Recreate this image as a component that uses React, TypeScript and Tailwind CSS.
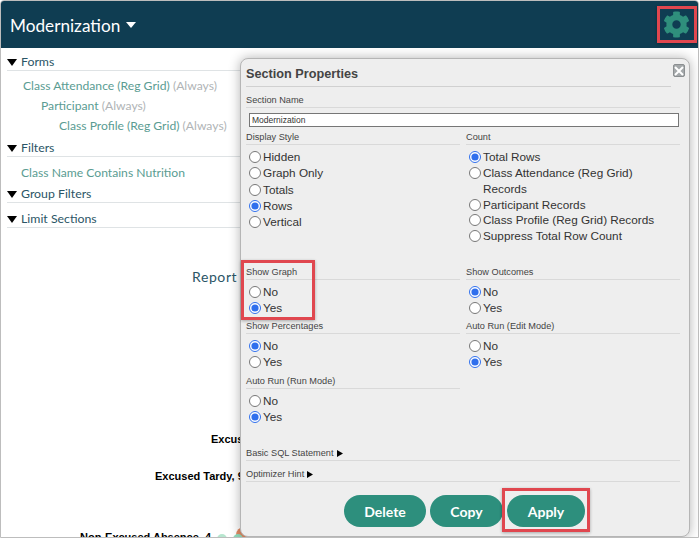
import React from 'react';
import { FaCog } from 'react-icons/fa';

const Caret = () => (
  <svg width="10" height="7" viewBox="0 0 10 7" className="shrink-0">
    <path d="M0 0h10L5 7z" fill="#000" />
  </svg>
);

const TreeHead = ({ label, className }: { label: string; className: string }) => (
  <div className={`flex items-center gap-[4px] border-b border-[#dfe3e5] h-[17px] text-[12.3px] text-[#2b5566] ${className}`}>
    <Caret />
    <span>{label}</span>
  </div>
);

const TreeLink = ({ name, note, className }: { name: string; note?: string; className: string }) => (
  <div className={`text-[12.15px] leading-[20px] whitespace-nowrap text-[#5a9c92] ${className}`}>
    {name} {note && <span className="text-[#b0b4b6]">{note}</span>}
  </div>
);

const Label = ({ text }: { text: string }) => (
  <div className="h-[14px] leading-[13px] text-[9.2px] text-[#444] border-b border-[#d9d9d9] whitespace-nowrap">{text}</div>
);

const Radio = ({ group, label, checked }: { group: string; label: string; checked?: boolean }) => (
  <label className="flex items-start ml-[3px] text-[11.75px] text-[#333]">
    <input type="radio" name={group} defaultChecked={checked} className="w-[12px] h-[12px] m-0 mt-[2px] mr-[2px] shrink-0 accent-[#2f6fed]" />
    <span>{label}</span>
  </label>
);

const Options = ({ group, items, selected, className }: { group: string; items: string[]; selected: string; className: string }) => (
  <div className={className}>
    {items.map((it) => (
      <Radio key={it} group={group} label={it} checked={it === selected} />
    ))}
  </div>
);

const PillButton = ({ text, className }: { text: string; className: string }) => (
  <button className={`h-[32px] rounded-full bg-[#2d8f7d] text-white text-[14px] font-bold ${className}`}>{text}</button>
);

export default function App() {
  return (
    <div className="relative w-[699px] h-[538px] overflow-hidden bg-white border border-[#bdbdbd] rounded-t-[4px] font-['Lato',sans-serif]">
      <div className="h-[47px] bg-[#0f3d52] flex items-center justify-between pl-[9px] pr-[8px]">
        <div className="flex items-center gap-[6px] pt-[2px] text-white text-[17.2px]">
          <span>Modernization</span>
          <svg width="10" height="6" viewBox="0 0 10 6"><path d="M0 0h10L5 6z" fill="#fff" /></svg>
        </div>
        <FaCog className="text-[#2f8f7c] w-[27px] h-[27px]" />
      </div>

      <div className="pl-[6px] w-[500px] pt-[6px]">
        <TreeHead label="Forms" className="" />
        <TreeLink name="Class Attendance (Reg Grid)" note="(Always)" className="ml-[16px] mt-[5px]" />
        <TreeLink name="Participant" note="(Always)" className="ml-[34px]" />
        <TreeLink name="Class Profile (Reg Grid)" note="(Always)" className="ml-[52px]" />
        <TreeHead label="Filters" className="mt-[4px]" />
        <TreeLink name="Class Name Contains Nutrition" className="ml-[14px] mt-[6px]" />
        <TreeHead label="Group Filters" className="mt-[3px]" />
        <TreeHead label="Limit Sections" className="mt-[8px]" />
      </div>

      {/* chart behind the dialog */}
      <div className="absolute left-[191px] top-[265px] text-[14px] tracking-[0.6px] text-[#2b5566]">Report</div>
      <div className="absolute left-[210px] top-[430px] text-[11px] font-bold text-black font-['Liberation_Sans',sans-serif]">Excused</div>
      <div className="absolute left-[154px] top-[467px] text-[11px] font-bold text-black whitespace-nowrap font-['Liberation_Sans',sans-serif]">Excused Tardy, 9</div>
      <div className="absolute left-[79px] top-[528px] text-[11px] font-bold text-black whitespace-nowrap font-['Liberation_Sans',sans-serif]">Non-Excused Absence, 4</div>
      <svg className="absolute left-[212px] top-[518px]" width="40" height="20" viewBox="0 0 40 20">
        <circle cx="31" cy="16" r="8" fill="#e08a63" />
        <circle cx="9" cy="20" r="5" fill="#b7e6cf" />
        <circle cx="25" cy="20" r="5" fill="#8fd8b8" />
      </svg>

      {/* section properties dialog */}
      <div className="absolute left-[239px] top-[57px] w-[450px] h-[479px] bg-[#eeeeee] border border-[#b5b5b5] rounded-[8px] shadow-[0_0_12px_rgba(0,0,0,0.3)] font-['Liberation_Sans',sans-serif] pl-[5px] pr-[9px]">
        <div className="h-[28px] mr-[9px] border-b border-[#d0d0d0] text-[12.7px] font-bold text-[#444] leading-[30px]">Section Properties</div>
        <button className="absolute right-[4px] top-[5px] w-[12px] h-[13px] rounded-[2px] bg-[#a4a8aa] flex items-center justify-center border border-[#8b8f91]">
          <svg width="10" height="10" viewBox="0 0 10 10"><path d="M1 1l8 8M9 1l-8 8" stroke="#fff" strokeWidth="2" /></svg>
        </button>

        <div className="mt-[7px]"><Label text="Section Name" /></div>
        <input
          readOnly
          value="Modernization"
          className="block w-[430px] h-[14px] mt-[5px] ml-[3px] px-[2px] bg-white border border-[#767676] text-[8.5px] text-[#333] outline-none"
        />

        <div className="grid grid-cols-[214px_214px] gap-x-[6px] mt-[4px]">
          <div className="h-[135px]">
            <Label text="Display Style" />
            <Options
              group="display"
              items={['Hidden', 'Graph Only', 'Totals', 'Rows', 'Vertical']}
              selected="Rows"
              className="mt-[4px] leading-[16.25px]"
            />
          </div>
          <div>
            <Label text="Count" />
            <Options
              group="count"
              items={['Total Rows', 'Class Attendance (Reg Grid) Records', 'Participant Records', 'Class Profile (Reg Grid) Records', 'Suppress Total Row Count']}
              selected="Total Rows"
              className="mt-[4px] pr-[20px] leading-[15.85px]"
            />
          </div>

          <div className="h-[54px]">
            <Label text="Show Graph" />
            <Options group="graph" items={['No', 'Yes']} selected="Yes" className="mt-[4px] leading-[16.25px]" />
          </div>
          <div>
            <Label text="Show Outcomes" />
            <Options group="outcomes" items={['No', 'Yes']} selected="No" className="mt-[4px] leading-[16.25px]" />
          </div>

          <div className="h-[55px]">
            <Label text="Show Percentages" />
            <Options group="percent" items={['No', 'Yes']} selected="No" className="mt-[4px] leading-[16.25px]" />
          </div>
          <div>
            <Label text="Auto Run (Edit Mode)" />
            <Options group="autoedit" items={['No', 'Yes']} selected="Yes" className="mt-[4px] leading-[16.25px]" />
          </div>

          <div className="h-[72px]">
            <Label text="Auto Run (Run Mode)" />
            <Options group="autorun" items={['No', 'Yes']} selected="Yes" className="mt-[4px] leading-[16.25px]" />
          </div>
        </div>

        <div className="flex items-center gap-[3px] h-[14px] text-[9.2px] text-[#444] border-b border-[#d9d9d9] leading-[13px]">
          Basic SQL Statement
          <svg width="6" height="7" viewBox="0 0 6 7"><path d="M0 0l6 3.5L0 7z" fill="#000" /></svg>
        </div>
        <div className="flex items-center gap-[3px] h-[14px] mt-[7px] text-[9.2px] text-[#444] border-b border-[#d9d9d9] leading-[13px]">
          Optimizer Hint
          <svg width="6" height="7" viewBox="0 0 6 7"><path d="M0 0l6 3.5L0 7z" fill="#000" /></svg>
        </div>

        <div className="flex gap-[4px] mt-[13px] ml-[98px] font-['Lato',sans-serif]">
          <PillButton text="Delete" className="w-[82px]" />
          <PillButton text="Copy" className="w-[73px]" />
          <PillButton text="Apply" className="w-[78px]" />
        </div>
      </div>

      {/* red callouts */}
      <div className="absolute left-[656px] top-[5px] w-[40px] h-[37px] border-[3px] border-[#e0474f] shadow-[0_1px_3px_rgba(0,0,0,0.3)]" />
      <div className="absolute left-[240px] top-[259px] w-[74px] h-[60px] border-[3px] border-[#e0474f] shadow-[0_1px_3px_rgba(0,0,0,0.3)]" />
      <div className="absolute left-[501px] top-[487px] w-[88px] h-[44px] border-[3px] border-[#e0474f] shadow-[0_1px_3px_rgba(0,0,0,0.3)]" />
    </div>
  );
}
